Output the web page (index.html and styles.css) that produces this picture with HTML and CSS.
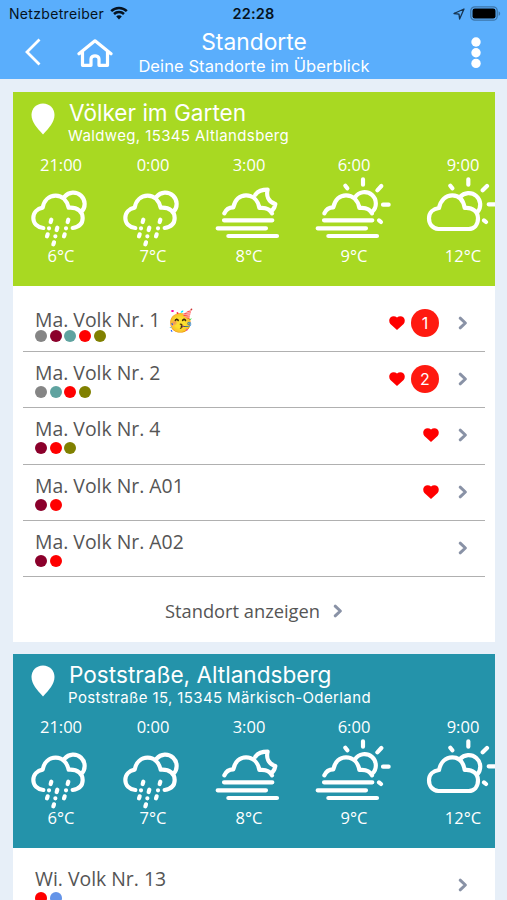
FILE: index.html
```html
<!DOCTYPE html>
<html lang="de">
<head>
<meta charset="utf-8">
<title>Standorte</title>
<link rel="stylesheet" href="styles.css">
</head>
<body>
<svg class="defs" width="0" height="0">
  <symbol id="rain" viewBox="-15 0 276 219">
    <path d="M70 159C52 157 40 145 40 129C40 112 52 101 68 98C72 76 87 62 107 62C127 62 141 77 146 98C174 96 188 111 188 129C188 146 177 156 158 159M134 65A34 34 0 1 1 184 111"/>
    <path d="M94 134L92 141M87 160h.1M83 178L81 184M112 158L110 165M106 184h.1M102 202L100 208M145 134L143 141M138 160h.1M134 178L132 184"/>
  </symbol>
  <symbol id="moonfog" viewBox="9 75 276 219">
    <path d="M73 190C78 178 88 172 100 172C105 148 120 136 138 136C158 136 174 150 178 174C196 172 210 178 216 190M166 134C174 123 186 119 203 119C198 137 205 156 226 162C224 172 220 180 212 184"/>
    <path d="M72 211H217M53 235H198M85 258H231"/>
  </symbol>
  <symbol id="sunfog" viewBox="24 75 276 219">
    <path d="M73 190C78 178 88 172 100 172C105 148 120 136 138 136C158 136 174 150 178 174C196 172 210 178 216 190M165 142A34 34 0 1 1 216 186"/>
    <path d="M72 211H217M53 235H198M85 258H231M189 88V104M244 108L232 121M249 164H266M136 107L142 115M237 211L243 216"/>
  </symbol>
  <symbol id="suncloud" viewBox="111 75 276 219">
    <path d="M175 237C157 235 147 222 147 205C147 187 160 176 177 174C182 150 197 136 217 136C237 136 250 150 254 174C278 172 294 185 294 205C294 224 283 237 266 237ZM240 141A34 34 0 1 1 292 187"/>
    <path d="M265 88V104M321 108L308 121M326 163H346M211 107L217 115M312 211L318 216"/>
  </symbol>
  <symbol id="heart" viewBox="0 0 16 14"><path d="M8 14L1.400 8C-.3 6 0 3 1.400 1.500C3.200-.2 6-.2 8 1.500C10-.2 12.800-.2 14.600 1.500C16 3 16.300 6 14.600 8Z"/></symbol>
  <symbol id="chev" viewBox="0 0 10 14"><path d="M2.200 2.200L7.400 7L2.200 11.800"/></symbol>
  <symbol id="pin" viewBox="0 0 24 32"><path d="M12 .5C5.300.5.500 5.500.500 12C.5 19 6 25 12 31.500C18 25 23.500 19 23.500 12C23.500 5.500 18.700.5 12 .5Z"/></symbol>
</svg>

<header class="top">
  <div class="status">
    <div class="carrier"><span>Netzbetreiber</span>
      <svg width="18" height="14" viewBox="0 0 18 14"><path d="M1.200 5.200C5.500.9 12.500.9 16.800 5.200M4 8C6.800 5.300 11.200 5.300 14 8" fill="none" stroke="#051220" stroke-width="2.500"/><path d="M9 13.500L6.200 10.400C7.700 8.900 10.300 8.900 11.800 10.400Z" fill="#051220"/></svg>
    </div>
    <div class="time">22:28</div>
    <div class="power">
      <svg width="12" height="12" viewBox="0 0 12 12"><path d="M11 1L1 5.500L6 6.200L6.600 11Z" fill="none" stroke="#173450" stroke-width="1.300" stroke-linejoin="round"/></svg>
      <svg width="31" height="15" viewBox="0 0 31 15"><rect x=".8" y=".8" width="26.400" height="13.400" rx="4" fill="none" stroke="#3c75a9" stroke-width="1.300"/><rect x="2.500" y="2.500" width="23" height="10" rx="2.300" fill="#000"/><path d="M28.600 5.200C30.600 6 30.600 9 28.600 9.800Z" fill="#3c75a9"/></svg>
    </div>
  </div>
  <div class="nav">
    <svg class="back" width="18" height="28" viewBox="0 0 18 28"><path d="M15.500 1.500L3 14L15.500 26.500" fill="none" stroke="#fff" stroke-width="2.800"/></svg>
    <svg class="home" width="36" height="28" viewBox="0 0 36 28"><path d="M2 14.800L18 1.800L34 14.800M5.500 12.500V26.300H14V20C14 15.800 22 15.800 22 20V26.300H30.500V12.500" fill="none" stroke="#fff" stroke-width="3.200" stroke-linecap="round" stroke-linejoin="round"/></svg>
    <div class="titles"><div class="title">Standorte</div><div class="subtitle">Deine Standorte im Überblick</div></div>
    <svg class="more" width="10" height="32" viewBox="0 0 10 32"><circle cx="5" cy="5" r="4.700"/><circle cx="5" cy="15.700" r="4.700"/><circle cx="5" cy="26.400" r="4.700"/></svg>
  </div>
</header>

<main>
  <section class="card">
    <div class="place green">
      <div class="place-head"><svg class="pin"><use href="#pin"/></svg><div><h2>Völker im Garten</h2><p>Waldweg, 15345 Altlandsberg</p></div></div>
      <div class="weather">
        <div><span>21:00</span><svg><use href="#rain"/></svg><span>6°C</span></div>
        <div><span>0:00</span><svg><use href="#rain"/></svg><span>7°C</span></div>
        <div><span>3:00</span><svg><use href="#moonfog"/></svg><span>8°C</span></div>
        <div><span>6:00</span><svg><use href="#sunfog"/></svg><span>9°C</span></div>
        <div><span>9:00</span><svg><use href="#suncloud"/></svg><span>12°C</span></div>
      </div>
    </div>
    <div class="list">
      <div class="row party"><div class="hive"><div class="name">Ma. Volk Nr. 1 <span class="emoji">🥳</span></div><div class="dots"><i class="gray"></i><i class="wine"></i><i class="teal"></i><i class="red"></i><i class="olive"></i></div></div><svg class="heart"><use href="#heart"/></svg><b class="badge">1</b><svg class="chev"><use href="#chev"/></svg></div>
      <div class="row"><div class="hive"><div class="name">Ma. Volk Nr. 2</div><div class="dots"><i class="gray"></i><i class="teal"></i><i class="red"></i><i class="olive"></i></div></div><svg class="heart"><use href="#heart"/></svg><b class="badge">2</b><svg class="chev"><use href="#chev"/></svg></div>
      <div class="row"><div class="hive"><div class="name">Ma. Volk Nr. 4</div><div class="dots"><i class="wine"></i><i class="red"></i><i class="olive"></i></div></div><svg class="heart"><use href="#heart"/></svg><svg class="chev"><use href="#chev"/></svg></div>
      <div class="row"><div class="hive"><div class="name">Ma. Volk Nr. A01</div><div class="dots"><i class="wine"></i><i class="red"></i></div></div><svg class="heart"><use href="#heart"/></svg><svg class="chev"><use href="#chev"/></svg></div>
      <div class="row"><div class="hive"><div class="name">Ma. Volk Nr. A02</div><div class="dots"><i class="wine"></i><i class="red"></i></div></div><svg class="chev"><use href="#chev"/></svg></div>
    </div>
    <div class="show"><span>Standort anzeigen</span><svg class="chev"><use href="#chev"/></svg></div>
  </section>

  <section class="card">
    <div class="place petrol">
      <div class="place-head"><svg class="pin"><use href="#pin"/></svg><div><h2>Poststraße, Altlandsberg</h2><p>Poststraße 15, 15345 Märkisch-Oderland</p></div></div>
      <div class="weather">
        <div><span>21:00</span><svg><use href="#rain"/></svg><span>6°C</span></div>
        <div><span>0:00</span><svg><use href="#rain"/></svg><span>7°C</span></div>
        <div><span>3:00</span><svg><use href="#moonfog"/></svg><span>8°C</span></div>
        <div><span>6:00</span><svg><use href="#sunfog"/></svg><span>9°C</span></div>
        <div><span>9:00</span><svg><use href="#suncloud"/></svg><span>12°C</span></div>
      </div>
    </div>
    <div class="list">
      <div class="row"><div class="hive"><div class="name">Wi. Volk Nr. 13</div><div class="dots"><i class="red"></i><i class="blue"></i></div></div><svg class="chev"><use href="#chev"/></svg></div>
    </div>
  </section>
</main>
</body>
</html>
```
FILE: styles.css
```css
* { box-sizing: border-box; }
html, body { margin: 0; height: 900px; overflow: hidden; }
body { background: #e7eff8; font-family: "Open Sans", sans-serif; color: #555; }
svg { display: block; flex: none; }
.defs { display: none; }

.top { height: 79px; background: #5aaefc; font-family: Inter, sans-serif; color: #fff; }
.status { height: 27px; display: grid; grid-template-columns: 1fr 60px 1fr; align-items: center; color: #051220; }
.carrier { display: flex; align-items: center; gap: 6px; padding-left: 9px; font-size: 14px; letter-spacing: .32px; }
.carrier svg { margin-top: -2px; }
.time { text-align: center; font-size: 14.500px; font-weight: 600; letter-spacing: .2px; }
.power { display: flex; justify-content: flex-end; align-items: center; gap: 5px; padding-right: 6px; }
.nav { height: 52px; display: flex; align-items: center; }
.back { margin: -2px 0 0 24px; }
.home { margin: -1px 0 0 35px; }
.titles { width: 282px; text-align: center; margin-top: -3px; }
.title { font-size: 22.800px; line-height: 27px; margin-top: 1px; }
.subtitle { font-size: 16.500px; line-height: 22px; letter-spacing: .09px; white-space: nowrap; }
.more { margin-left: 76px; fill: #fff; }

main { padding: 13px 12px 0 13px; }
.card { background: #fff; margin-bottom: 12px; overflow: hidden; }
.place { height: 194px; color: #fff; overflow: hidden; }
.green { background: #a8d922; }
.petrol { background: #2493aa; }
.place-head { display: flex; height: 63px; padding: 11px 0 0 18px; font-family: Inter, sans-serif; }
.pin { width: 24px; height: 32px; fill: #fff; margin: 0 13px 0 0; }
.place h2 { margin: -4px 0 0 1px; font-size: 22.600px; line-height: 27px; font-weight: 400; white-space: nowrap; }
.place p { margin: 0; font-size: 15px; line-height: 19px; letter-spacing: .38px; white-space: nowrap; }
.weather { display: grid; grid-template-columns: 92px 92px 100px 110px 108px; padding-left: 2px; }
.weather div { display: flex; flex-direction: column; align-items: center; font-size: 16.500px; line-height: 20px; }
.weather svg { width: 92px; height: 73px; margin-bottom: -2px; fill: none; stroke: #fff; stroke-width: 12.500; stroke-linecap: round; stroke-linejoin: round; }

.list { padding: 10px 10px 0; }
.row { height: 56.2px; display: flex; align-items: center; border-bottom: 1px solid #b0b0b0; padding: 0 17px 1px 0; }
.hive { flex: 1; align-self: stretch; padding: 8px 0 0 12px; }
.name { font-size: 19.400px; line-height: 25px; white-space: nowrap; display: flex; gap: 7px; }
.emoji { font-size: 21.500px; }
.dots { display: flex; gap: 2.700px; margin-top: 1px; }
.dots i { width: 12px; height: 12px; border-radius: 50%; }
.party .hive { padding-top: 11px; }
.party .dots { margin-top: -2px; }
.gray { background: #858585; }
.wine { background: #8b002b; }
.teal { background: #5fa3a0; }
.red { background: #f00; }
.olive { background: #808000; }
.blue { background: #6494e8; }
.heart { width: 16px; height: 14px; fill: #f00; margin-right: 19px; }
.badge { width: 28px; height: 28px; margin: 0 19px 0 -13px; border-radius: 50%; background: #ff1a10; color: #fff; font: 400 16px/28px Inter, sans-serif; text-align: center; }
.chev { width: 10px; height: 14px; fill: none; stroke: #8992a6; stroke-width: 3; stroke-linecap: round; stroke-linejoin: round; }
.show { height: 65px; display: flex; align-items: center; justify-content: center; gap: 13px; font-size: 18.300px; padding-top: 3px; }
```
